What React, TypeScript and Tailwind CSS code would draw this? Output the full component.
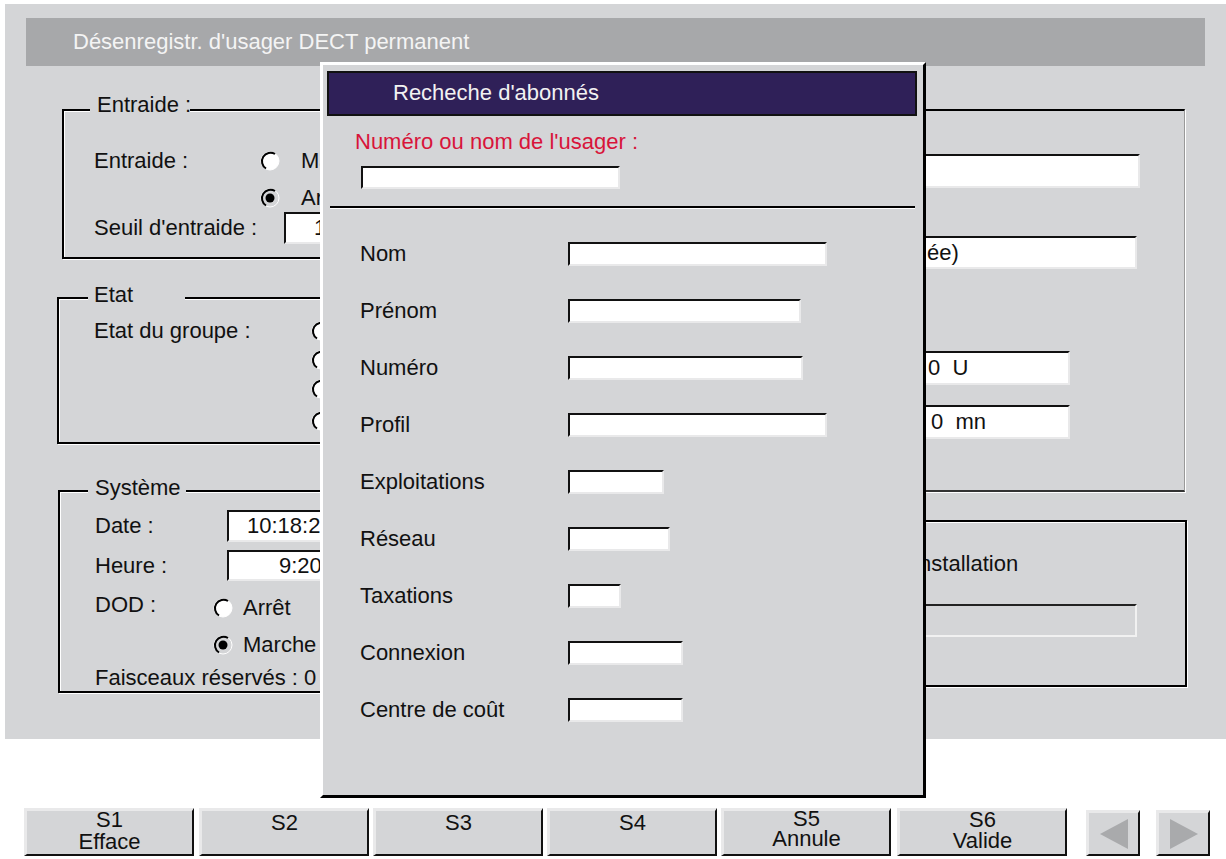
const panel = "bg-[#d4d5d7]";

function Sunken({
  className,
  children,
}: {
  className: string;
  children?: React.ReactNode;
}) {
  return (
    <div
      className={`flex items-center whitespace-pre border-t-2 border-l-2 border-t-[#111] border-l-[#111] border-r-2 border-b-2 border-r-[#e9e9ea] border-b-[#e9e9ea] bg-white ${className}`}
    >
      {children}
    </div>
  );
}

function Radio({ checked }: { checked?: boolean }) {
  return (
    <svg width="20" height="20" viewBox="0 0 20 20" className="shrink-0">
      <circle cx="10" cy="10" r="9" fill={checked ? "#d4d5d7" : "#fff"} stroke="#fff" strokeWidth="1" />
      <path d="M15 3A8.5 8.5 0 0 0 6 17.5" fill="none" stroke="#000" strokeWidth="2" />
      {checked ? <circle cx="10" cy="10" r="4.5" fill="#000" /> : null}
    </svg>
  );
}

function GroupBox({
  className,
  legend,
  legendClass,
  children,
}: {
  className: string;
  legend: string;
  legendClass: string;
  children: React.ReactNode;
}) {
  return (
    <div
      className={`relative border-2 border-black shadow-[1px_1px_0_#fff,inset_1px_1px_0_#fff] ${className}`}
    >
      <span className={`absolute whitespace-nowrap ${legendClass} ${panel} leading-[24px]`}>
        {legend}
      </span>
      {children}
    </div>
  );
}

const fields = [
  { label: "Nom", width: "w-[259px]" },
  { label: "Prénom", width: "w-[233px]" },
  { label: "Numéro", width: "w-[235px]" },
  { label: "Profil", width: "w-[259px]" },
  { label: "Exploitations", width: "w-[96px]" },
  { label: "Réseau", width: "w-[102px]" },
  { label: "Taxations", width: "w-[53px]" },
  { label: "Connexion", width: "w-[115px]" },
  { label: "Centre de coût", width: "w-[115px]" },
];

function SoftKey({
  top,
  bottom,
  width,
  leading = "leading-[22px]",
}: {
  top: string;
  bottom?: string;
  width: string;
  leading?: string;
}) {
  return (
    <div
      className={`flex h-[48px] flex-col items-center border-t-[3px] border-l-[3px] border-t-[#e9e9ea] border-l-[#e9e9ea] border-r-2 border-b-2 border-r-[#111] border-b-[#111] bg-[#d4d5d7] ${leading} ${width}`}
    >
      <span className={bottom ? "mt-[-2px]" : "mt-[1px]"}>{top}</span>
      {bottom ? <span>{bottom}</span> : null}
    </div>
  );
}

function ArrowKey({ points, className }: { points: string; className: string }) {
  return (
    <div
      className={`mt-[2px] flex h-[46px] w-[54px] items-center justify-center border-t-[3px] border-l-[3px] border-t-[#e9e9ea] border-l-[#e9e9ea] border-r-2 border-b-2 border-r-[#111] border-b-[#111] bg-[#d4d5d7] ${className}`}
    >
      <svg width="32" height="32" viewBox="0 0 32 32">
        <polygon points={points} fill="#a9aaac" />
      </svg>
    </div>
  );
}

export default function App() {
  return (
    <div
      className="relative h-[859px] w-[1226px] overflow-hidden bg-white text-[22px] leading-[24px] text-[#111]"
      style={{ fontFamily: '"Liberation Sans", Arial, sans-serif' }}
    >
      <div className={`ml-[5px] h-[739px] pt-[4px] ${panel} border-t-[4px] border-white`}>
        <div className="ml-[21px] mr-[21px] mt-[10px] flex h-[48px] items-center bg-[#a7a8aa] pl-[47px] text-[#f4f4f4]">
          Désenregistr. d'usager DECT permanent
        </div>

        <div className="flex">
          {/* colonne gauche */}
          <div className="ml-[52px] w-[555px] shrink-0">
            <GroupBox
              className="ml-[5px] mt-[43px] h-[150px]"
              legend="Entraide :"
              legendClass="-top-[18px] left-[26px] w-[100px] pl-[7px]"
            >
              <div className="ml-[30px] mt-[38px] flex items-center">
                <span className="w-[166px]">Entraide :</span>
                <Radio />
                <span className="ml-[21px]">Marche</span>
              </div>
              <div className="ml-[196px] mt-[13px] flex items-center">
                <Radio checked />
                <span className="ml-[21px]">Arrêt</span>
              </div>
              <div className="ml-[30px] mt-[2px] flex items-center">
                <span className="w-[190px]">Seuil d'entraide :</span>
                <Sunken className="h-[32px] w-[90px] pl-[28px]">1</Sunken>
              </div>
            </GroupBox>

            <GroupBox
              className="mt-[38px] h-[147px]"
              legend="Etat"
              legendClass="-top-[16px] left-[29px] w-[97px] pl-[6px]"
            >
              <div className="ml-[35px] mt-[20px] flex">
                <span className="w-[217px]">Etat du groupe :</span>
                <div className="mt-[2px] flex flex-col gap-[9px]">
                  <Radio />
                  <Radio />
                  <Radio />
                  <div className="mt-[3px]">
                    <Radio />
                  </div>
                </div>
              </div>
            </GroupBox>

            <GroupBox
              className="ml-[1px] mt-[46px] h-[203px]"
              legend="Système"
              legendClass="-top-[16px] left-[28px] w-[98px] pl-[7px]"
            >
              <div className="ml-[35px] mt-[18px] flex items-center">
                <span className="w-[132px]">Date :</span>
                <Sunken className="h-[32px] w-[120px] pl-[18px]">10:18:20</Sunken>
              </div>
              <div className="ml-[35px] mt-[8px] flex items-center">
                <span className="w-[132px]">Heure :</span>
                <Sunken className="h-[31px] w-[120px] pl-[50px]">9:20</Sunken>
              </div>
              <div className="ml-[35px] mt-[9px] flex items-center">
                <span className="w-[118px]">DOD :</span>
                <span className="mt-[6px] flex items-center">
                  <Radio />
                  <span className="ml-[10px]">Arrêt</span>
                </span>
              </div>
              <div className="ml-[153px] mt-[13px] flex items-center">
                <Radio checked />
                <span className="ml-[10px]">Marche</span>
              </div>
              <div className="ml-[35px] mt-[9px]">Faisceaux réservés : 0</div>
            </GroupBox>
          </div>

          {/* colonne droite */}
          <div className="w-[576px] shrink-0">
            <div className="mt-[43px] h-[383px] w-[573px] border-t-2 border-b-2 border-r border-t-black border-b-[#333] border-r-[#999] shadow-[1px_1px_0_#fff]">
              <Sunken className="ml-[200px] mt-[43px] h-[34px] w-[328px]" />
              <Sunken className="ml-[200px] mt-[48px] h-[33px] w-[325px] pl-[113px]">ée)</Sunken>
              <Sunken className="ml-[200px] mt-[82px] h-[34px] w-[258px] pl-[114px]">0  U</Sunken>
              <Sunken className="ml-[200px] mt-[20px] h-[34px] w-[258px] pl-[117px]">0  mn</Sunken>
            </div>
            <div className="mt-[28px] h-[167px] w-[575px] border-2 border-black shadow-[1px_1px_0_#fff,inset_1px_1px_0_#fff]">
              <div className="ml-[299px] mt-[30px]">Installation</div>
              <div className="ml-[198px] mt-[28px] h-[33px] w-[325px] border-t-2 border-r-2 border-b-2 border-t-[#222] border-r-[#f1f1f1] border-b-[#f1f1f1]" />
            </div>
          </div>
        </div>
      </div>

      <div className="ml-[24px] mt-[69px] flex items-start">
        <SoftKey top="S1" bottom="Efface" width="w-[170px]" />
        <SoftKey top="S2" width="ml-[5px] w-[170px]" />
        <SoftKey top="S3" width="ml-[4px] w-[170px]" />
        <SoftKey top="S4" width="ml-[4px] w-[170px]" />
        <SoftKey top="S5" bottom="Annule" width="ml-[4px] w-[170px]" leading="leading-[20px]" />
        <SoftKey top="S6" bottom="Valide" width="ml-[6px] w-[170px]" leading="leading-[21px]" />
        <ArrowKey points="2,16 30,1 30,31" className="ml-[19px]" />
        <ArrowKey points="2,1 30,16 2,31" className="ml-[16px]" />
      </div>

      {/* boîte de dialogue */}
      <div
        className={`absolute left-[320px] top-[62px] h-[736px] w-[606px] border-t-[3px] border-l-[3px] border-r-[3px] border-b-[3px] border-t-white border-l-white border-r-black border-b-black ${panel}`}
      >
        <div className="ml-[4px] mt-[6px] flex h-[45px] w-[590px] items-center border-2 border-[#111] bg-[#2f2058] pb-[2px] pl-[64px] text-[#f2f2f2]">
          Recheche d'abonnés
        </div>
        <div className="ml-[32px] mt-[14px] text-[#d8143a]">Numéro ou nom de l'usager :</div>
        <Sunken className="ml-[38px] mt-[12px] h-[23px] w-[259px]" />
        <div className="ml-[7px] mt-[17px] h-[3px] w-[585px] border-t-2 border-black bg-white" />
        <div className="mt-[33px] flex flex-col gap-[33px]">
          {fields.map((field) => (
            <div className="flex h-[24px] items-center" key={field.label}>
              <span className="ml-[37px] w-[208px] shrink-0">{field.label}</span>
              <Sunken className={`h-[24px] ${field.width}`} />
            </div>
          ))}
        </div>
      </div>
    </div>
  );
}
